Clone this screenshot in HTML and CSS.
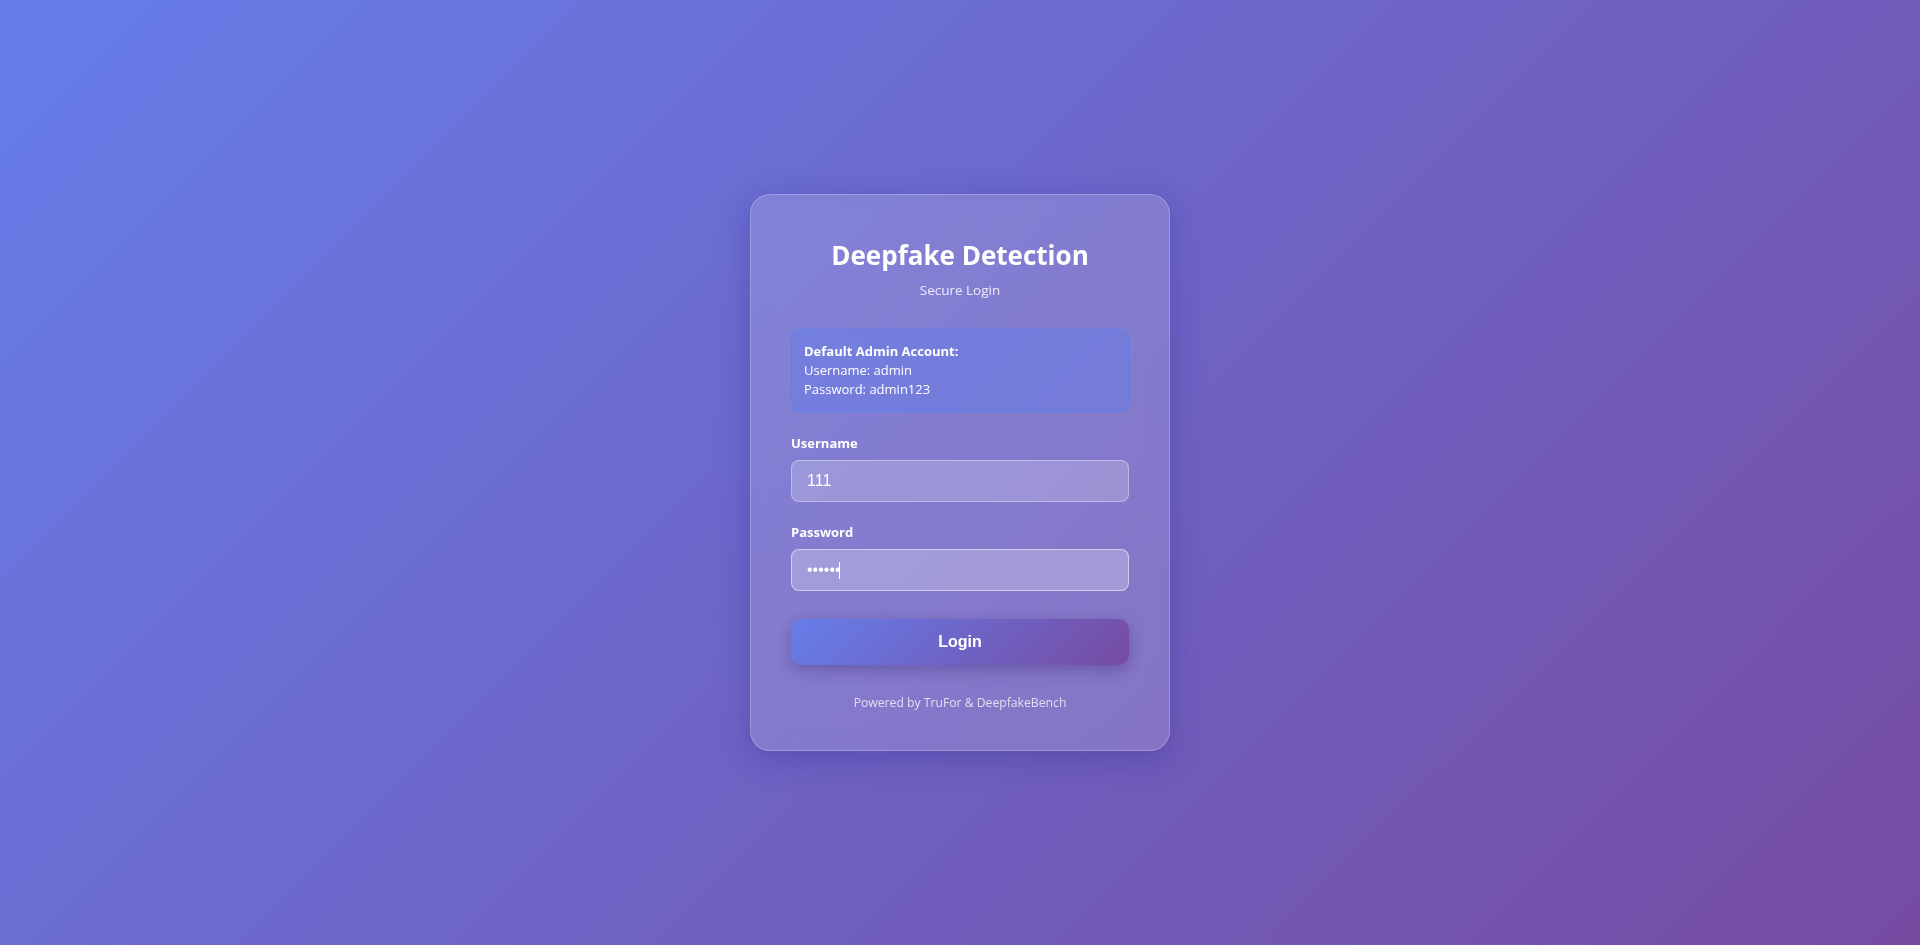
FILE: index.html
```html
<!DOCTYPE html>
<html lang="en">
<head>
<meta charset="utf-8">
<title>Deepfake Detection - Login</title>
<link rel="stylesheet" href="styles.css">
</head>
<body>
<main class="login-card">
  <h1 class="title">Deepfake Detection</h1>
  <p class="subtitle">Secure Login</p>
  <div class="info-box">
    <strong>Default Admin Account:</strong><br>
    Username: admin<br>
    Password: admin123
  </div>
  <form class="login-form">
    <div class="form-group">
      <label class="label" for="username">Username</label>
      <input class="input" id="username" type="text" value="111">
    </div>
    <div class="form-group">
      <label class="label" for="password">Password</label>
      <div class="input-wrap">
        <input class="input input-focused" id="password" type="password" value="111111">
        <span class="caret"></span>
      </div>
    </div>
    <button class="btn-login" type="button">Login</button>
  </form>
  <p class="footer">Powered by TruFor &amp; DeepfakeBench</p>
</main>
</body>
</html>
```
FILE: styles.css
```css
* { box-sizing: border-box; }

html, body { height: 100%; }

body {
  margin: 0;
  font-family: "Open Sans", "Noto Sans", sans-serif;
  color: #fff;
  background: linear-gradient(135deg, #667eea 0%, #764ba2 100%);
  display: flex;
  align-items: center;
  justify-content: center;
}

.login-card {
  width: 420px;
  padding: 41px 40px 39px;
  background: rgba(255, 255, 255, 0.15);
  border: 1px solid rgba(255, 255, 255, 0.22);
  border-radius: 20px;
  box-shadow: 0 8px 32px rgba(31, 38, 135, 0.3);
  backdrop-filter: blur(10px);
}

.title {
  margin: 0 0 6px;
  font-size: 26px;
  line-height: 38px;
  font-weight: 700;
  text-align: center;
}

.subtitle {
  margin: 0 0 29px;
  font-size: 13.5px;
  line-height: 20px;
  text-align: center;
  color: rgba(255, 255, 255, 0.85);
}

.info-box {
  padding: 12px;
  margin-bottom: 21px;
  font-size: 13px;
  line-height: 19px;
  background: rgba(95, 125, 235, 0.4);
  border: 1px solid rgba(80, 130, 245, 0.6);
  border-radius: 10px;
}

.info-box strong { font-weight: 700; }

.form-group { margin-bottom: 20px; }

.label {
  display: block;
  margin-bottom: 7px;
  font-size: 13px;
  line-height: 20px;
  font-weight: 700;
}

.input-wrap { position: relative; }

.input {
  display: block;
  width: 100%;
  padding: 11px 15px;
  font-family: "Liberation Sans", Arial, sans-serif;
  font-size: 16px;
  line-height: 18px;
  color: #fff;
  background: rgba(255, 255, 255, 0.2);
  border: 1px solid rgba(255, 255, 255, 0.35);
  border-radius: 8px;
  outline: none;
  caret-color: #fff;
}

.input-focused {
  background: rgba(255, 255, 255, 0.25);
  border-color: rgba(255, 255, 255, 0.5);
}

.caret {
  position: absolute;
  left: 48px;
  top: 13px;
  width: 1px;
  height: 17px;
  background: #fff;
}

.btn-login {
  display: block;
  width: 100%;
  margin-top: 28px;
  padding: 0;
  height: 46px;
  font-family: "Liberation Sans", Arial, sans-serif;
  font-size: 16px;
  font-weight: 700;
  color: #fff;
  background: linear-gradient(135deg, #667eea 0%, #764ba2 100%);
  border: none;
  border-radius: 10px;
  box-shadow: 0 5px 15px rgba(40, 20, 90, 0.3);
  cursor: pointer;
}

.footer {
  margin: 29px 0 0;
  font-size: 12.2px;
  line-height: 17px;
  text-align: center;
  color: rgba(255, 255, 255, 0.75);
}
```
